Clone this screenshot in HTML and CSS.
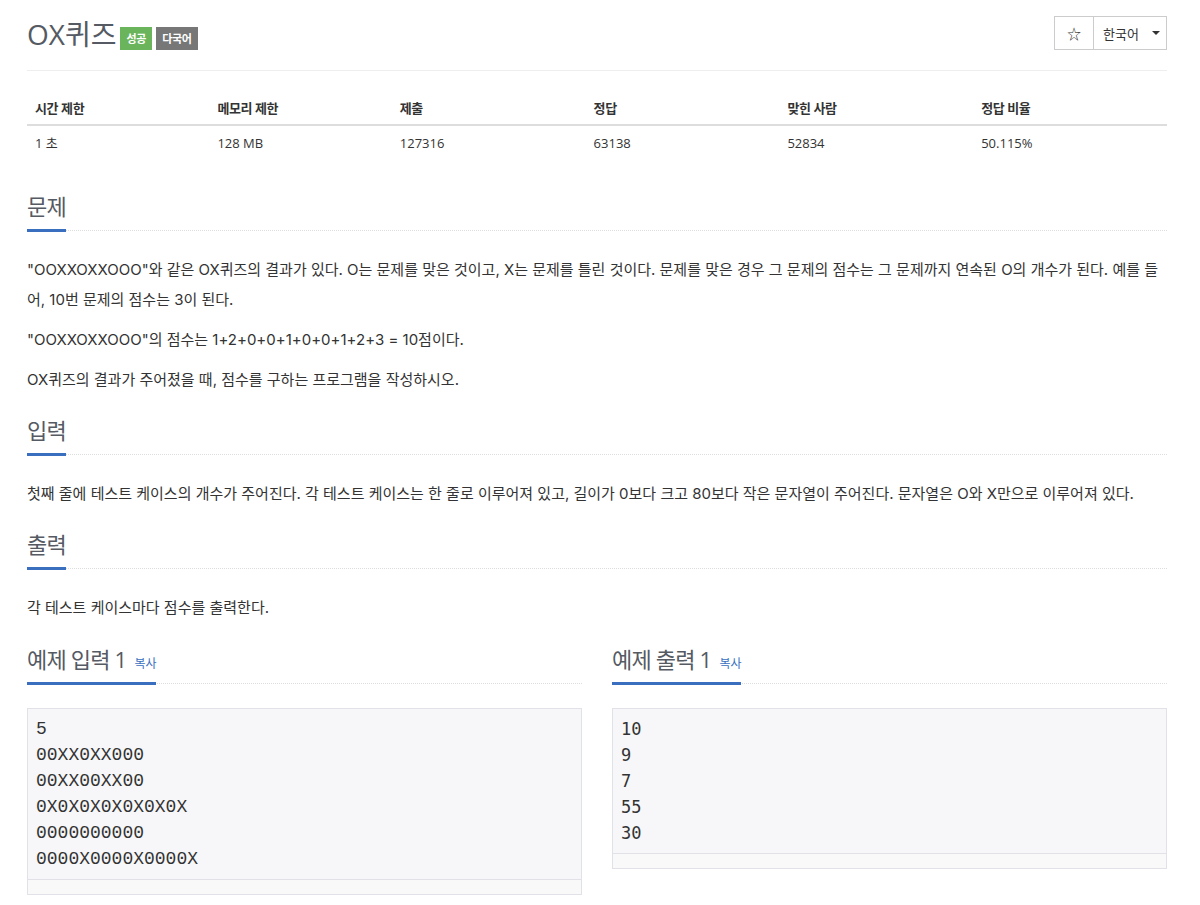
FILE: index.html
```html
<!DOCTYPE html>
<html lang="ko">
<head>
<meta charset="utf-8">
<title>OX퀴즈</title>
<link rel="stylesheet" href="styles.css">
</head>
<body>
<div class="container">
  <div class="page-header">
    <h1 class="title"><span class="title-text">OX퀴즈</span><span class="badge badge-success">성공</span><span class="badge badge-gray">다국어</span></h1>
    <div class="btn-group">
      <button class="btn btn-star">☆</button>
      <button class="btn btn-lang">한국어<span class="caret"></span></button>
    </div>
  </div>

  <table class="info">
    <thead>
      <tr><th class="c1">시간 제한</th><th class="c1">메모리 제한</th><th class="c2">제출</th><th class="c2">정답</th><th class="c2">맞힌 사람</th><th class="c2">정답 비율</th></tr>
    </thead>
    <tbody>
      <tr><td>1 초</td><td>128 MB</td><td>127316</td><td>63138</td><td>52834</td><td>50.115%</td></tr>
    </tbody>
  </table>

  <section class="section first">
    <div class="headline"><h2>문제</h2></div>
    <div class="text">
      <p>"OOXXOXXOOO"와 같은 OX퀴즈의 결과가 있다. O는 문제를 맞은 것이고, X는 문제를 틀린 것이다. 문제를 맞은 경우 그 문제의 점수는 그 문제까지 연속된 O의 개수가 된다. 예를 들어, 10번 문제의 점수는 3이 된다.</p>
      <p>"OOXXOXXOOO"의 점수는 1+2+0+0+1+0+0+1+2+3 = 10점이다.</p>
      <p>OX퀴즈의 결과가 주어졌을 때, 점수를 구하는 프로그램을 작성하시오.</p>
    </div>
  </section>

  <section class="section">
    <div class="headline"><h2>입력</h2></div>
    <div class="text">
      <p>첫째 줄에 테스트 케이스의 개수가 주어진다. 각 테스트 케이스는 한 줄로 이루어져 있고, 길이가 0보다 크고 80보다 작은 문자열이 주어진다. 문자열은 O와 X만으로 이루어져 있다.</p>
    </div>
  </section>

  <section class="section">
    <div class="headline"><h2>출력</h2></div>
    <div class="text">
      <p>각 테스트 케이스마다 점수를 출력한다.</p>
    </div>
  </section>

  <div class="samples">
    <section class="sample">
      <div class="headline"><h2>예제 입력 1<a class="copy">복사</a></h2></div>
      <div class="sample-box">
        <pre class="sample-data in">5
00XX0XX000
00XX00XX00
0X0X0X0X0X0X0X
0000000000
0000X0000X0000X</pre>
        <div class="scroll-strip"></div>
      </div>
    </section>
    <section class="sample">
      <div class="headline"><h2>예제 출력 1<a class="copy">복사</a></h2></div>
      <div class="sample-box">
        <pre class="sample-data out">10
9
7
55
30</pre>
        <div class="scroll-strip"></div>
      </div>
    </section>
  </div>
</div>
</body>
</html>
```

FILE: styles.css
```css
* { box-sizing: border-box; }
body {
  margin: 0;
  font-family: "Open Sans", "Noto Sans CJK KR", sans-serif;
  color: #333;
  background: #fff;
}
.container {
  width: 1140px;
  margin-left: 27px;
}
.page-header {
  display: flex;
  justify-content: space-between;
  align-items: flex-start;
  padding-top: 14px;
  padding-bottom: 16px;
  border-bottom: 1px solid #eee;
}
.title {
  margin: 0;
  font-size: 28px;
  font-weight: 400;
  color: #555a63;
  line-height: 40px;
  display: flex;
  align-items: center;
}
.title-text { margin-right: 4px; }
.badge {
  display: inline-block;
  font-size: 11px;
  font-weight: 700;
  color: #fff;
  line-height: 23px;
  height: 23px;
  padding: 0 6px;
  margin-top: 8px;
  letter-spacing: -0.3px;
}
.badge-success { background: #6ab45c; }
.badge-gray { background: #777; margin-left: 4px; }
.btn-group { display: flex; margin-top: 2px; }
.btn {
  font-family: "Open Sans", "Noto Sans CJK KR", sans-serif;
  font-size: 13px;
  background: #fff;
  border: 1px solid #ccc;
  color: #333;
  height: 34px;
  margin: 0;
  display: flex;
  align-items: center;
  white-space: nowrap;
}
.btn-star { width: 40px; justify-content: center; padding: 0; font-size: 14px; }
.btn-lang { border-left: 0; width: 73px; justify-content: flex-start; padding: 0 0 0 9px; }
.caret {
  display: inline-block;
  width: 0; height: 0;
  border-left: 4px solid transparent;
  border-right: 4px solid transparent;
  border-top: 4px solid #333;
  margin-left: 13px;
}

table.info {
  width: 100%;
  border-collapse: collapse;
  margin-top: 20px;
  font-size: 13px;
}
table.info th, table.info td {
  text-align: left;
  padding: 8px;
  line-height: 19px;
}
table.info th {
  font-weight: 700;
  border-bottom: 2px solid #ddd;
  padding-bottom: 6px;
  letter-spacing: -0.4px;
}
table.info .c1 { width: 16%; }
table.info .c2 { width: 17%; }

.section { margin-top: 22px; }
.section.first { margin-top: 32px; }
.headline {
  border-bottom: 1px dotted #ddd;
}
.headline h2 {
  display: inline-block;
  margin: 0 0 -2px;
  font-size: 22px;
  font-weight: 400;
  line-height: 26px;
  letter-spacing: -0.8px;
  color: #555a63;
  padding-bottom: 10px;
  border-bottom: 3px solid #3a6fbf;
}
.text {
  margin-top: 24px;
  font-family: "Inter", "Noto Sans CJK KR", sans-serif;
  font-size: 15px;
  line-height: 30px;
}
.text p { margin: 0 0 10px; }

.copy {
  font-size: 12px;
  line-height: 1;
  letter-spacing: 0;
  color: #3a6fbf;
  margin-left: 8px;
}
.samples {
  display: flex;
  gap: 30px;
  margin-top: 23px;
}
.sample { flex: 1; }
.sample-box {
  margin-top: 24px;
  border: 1px solid #e1e1e8;
  background: #f7f7f9;
}
.sample-data {
  margin: 0;
  padding: 7px 8px;
  line-height: 26px;
  color: #333;
  border-bottom: 1px solid #e1e1e8;
}
.sample-data.in { font-family: "Liberation Mono", monospace; font-size: 18px; }
.sample-data.out { font-family: "DejaVu Sans Mono", monospace; font-size: 17px; }
.scroll-strip { height: 14px; background: #f9f9fa; }
```
